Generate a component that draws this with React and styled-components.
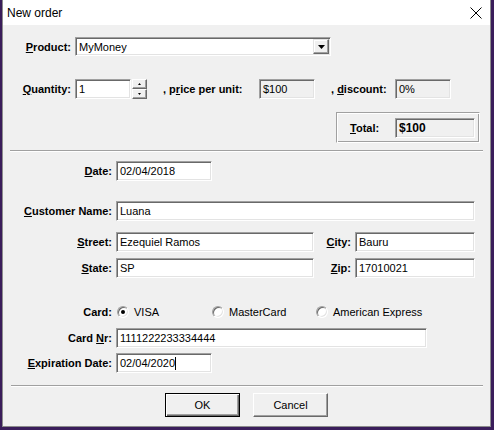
import React from 'react'
import styled, { createGlobalStyle } from 'styled-components'

const GlobalStyle = createGlobalStyle`
  html, body {
    margin: 0;
    padding: 0;
  }
  body {
    width: 494px;
    height: 430px;
    overflow: hidden;
    background: #3a1d5a;
    font-family: "Liberation Sans", Arial, sans-serif;
    font-size: 11px;
    color: #000;
  }
`

const Window = styled.div`
  margin-left: 2px;
  width: 489px;
  height: 427px;
  box-sizing: border-box;
  background: #f0f0f0;
  border: 1px solid #8c8c8c;
  border-top: none;
  display: flex;
  flex-direction: column;
`

const TitleBar = styled.div`
  height: 25px;
  flex-shrink: 0;
  background: #fff;
  display: flex;
  align-items: center;
  justify-content: space-between;
  padding: 0 8px 0 4px;
  font-size: 12px;
`

const Row = styled.div`
  display: flex;
  align-items: center;
  height: ${p => p.$h || 20}px;
  margin-top: ${p => p.$top || 0}px;
  justify-content: ${p => p.$justify || 'flex-start'};
  gap: ${p => p.$gap || 0}px;
  flex-shrink: 0;
`

const Label = styled.label`
  width: ${p => p.$w}px;
  flex-shrink: 0;
  text-align: ${p => p.$align || 'right'};
  font-weight: bold;
  margin-right: 4px;
  margin-left: ${p => p.$ml || 0}px;
  white-space: nowrap;
`

const Field = styled.div`
  width: ${p => p.$w}px;
  height: ${p => p.$h || 20}px;
  box-sizing: border-box;
  flex-shrink: 0;
  background: ${p => (p.$readOnly ? '#f0f0f0' : '#fff')};
  border: 1px solid;
  border-color: #a0a0a0 #fff #fff #a0a0a0;
  box-shadow: inset 1px 1px #696969, inset -1px -1px #e3e3e3;
  padding-left: 3px;
  display: flex;
  align-items: center;
  font-weight: ${p => (p.$bold ? 'bold' : 'normal')};
  font-size: ${p => (p.$bold ? 12 : 11)}px;
  white-space: nowrap;
  overflow: hidden;
`

const Caret = styled.span`
  display: inline-block;
  width: 1px;
  height: 13px;
  background: #000;
`

const Select = styled(Field)`
  justify-content: space-between;
  padding-right: 1px;
`

const DropButton = styled.div`
  width: 16px;
  height: 15px;
  box-sizing: border-box;
  background: #f0f0f0;
  border: 1px solid;
  border-color: #e3e3e3 #696969 #696969 #e3e3e3;
  box-shadow: inset -1px -1px #a0a0a0, inset 1px 1px #fff;
  display: flex;
  align-items: center;
  justify-content: center;
`

const Spinner = styled.div`
  width: 15px;
  height: 20px;
  margin-left: 1px;
  display: flex;
  flex-direction: column;
  flex-shrink: 0;
`

const SpinHalf = styled.div`
  flex: 1;
  box-sizing: border-box;
  background: #f0f0f0;
  border: 1px solid;
  border-color: #fff #696969 #696969 #fff;
  box-shadow: inset -1px -1px #a0a0a0;
  display: flex;
  align-items: center;
  justify-content: center;
`

const TotalBox = styled.div`
  width: 144px;
  height: 31px;
  box-sizing: border-box;
  margin-right: 10px;
  border: 1px solid;
  border-color: #a0a0a0 #fff #fff #a0a0a0;
  box-shadow: inset 1px 1px #fff, inset -1px -1px #a0a0a0;
  display: flex;
  align-items: center;
  padding-left: 13px;
`

const Separator = styled.div`
  height: 1px;
  flex-shrink: 0;
  margin: ${p => p.$top}px ${p => p.$right}px 0 ${p => p.$left}px;
  background: #a0a0a0;
  border-bottom: 1px solid #fff;
`

const Radio = styled.div`
  width: ${p => p.$w}px;
  display: flex;
  align-items: center;
  gap: 5px;
  flex-shrink: 0;
`

const RadioDot = styled.span`
  width: 12px;
  height: 12px;
  margin-left: 1px;
  box-sizing: border-box;
  border-radius: 50%;
  background: #fff;
  border: 1px solid;
  border-color: #a0a0a0 #fff #fff #a0a0a0;
  box-shadow: inset 1px 1px #696969, inset -1px -1px #e3e3e3;
  display: flex;
  align-items: center;
  justify-content: center;
  &::after {
    content: '';
    width: 4px;
    height: 4px;
    border-radius: 50%;
    background: ${p => (p.$checked ? '#000' : 'transparent')};
  }
`

const Button = styled.button`
  width: 75px;
  height: 24px;
  box-sizing: border-box;
  padding: 0;
  font-family: inherit;
  font-size: 11px;
  color: #000;
  background: #f0f0f0;
  border: 1px solid;
  border-color: ${p => (p.$default ? '#000' : '#fff #696969 #696969 #fff')};
  box-shadow: ${p =>
    p.$default
      ? 'inset 1px 1px #fff, inset -1px -1px #696969, inset -2px -2px #a0a0a0'
      : 'inset -1px -1px #a0a0a0'};
`

const Arrow = ({ w = 7, h = 4 }) => (
  <svg width={w} height={h} viewBox={`0 0 ${w} ${h}`}>
    <polygon points={`0,0 ${w},0 ${w / 2},${h}`} fill="#000" />
  </svg>
)

const UpArrow = () => (
  <svg width="3" height="2" viewBox="0 0 3 2">
    <polygon points="0,2 3,2 1.5,0" fill="#000" />
  </svg>
)

const CloseIcon = () => (
  <svg width="12" height="12" viewBox="0 0 12 12">
    <path d="M0.5 0.5 L11.5 11.5 M11.5 0.5 L0.5 11.5" stroke="#000" strokeWidth="1" />
  </svg>
)

const App = () => {
  return (
    <>
      <GlobalStyle />
      <Window>
        <TitleBar>
          <span>New order</span>
          <CloseIcon />
        </TitleBar>

        {/* product */}
        <Row $top={12} $h={19}>
          <Label $w={68}><u>P</u>roduct:</Label>
          <Select $w={256} $h={19}>
            <span>MyMoney</span>
            <DropButton><Arrow /></DropButton>
          </Select>
        </Row>

        {/* quantity, price, discount */}
        <Row $top={23}>
          <Label $w={68}><u>Q</u>uantity:</Label>
          <Field $w={56}>1</Field>
          <Spinner>
            <SpinHalf><UpArrow /></SpinHalf>
            <SpinHalf><Arrow w={3} h={2} /></SpinHalf>
          </Spinner>
          <Label $w={92} $ml={16} $align="left">, p<u>r</u>ice per unit:</Label>
          <Field $w={56} $readOnly>$100</Field>
          <Label $w={60} $ml={16} $align="left">, <u>d</u>iscount:</Label>
          <Field $w={56} $readOnly>0%</Field>
        </Row>

        {/* total */}
        <Row $top={13} $h={31} $justify="flex-end">
          <TotalBox>
            <Label $w={41} $align="left"><u>T</u>otal:</Label>
            <Field $w={80} $readOnly $bold>$100</Field>
          </TotalBox>
        </Row>

        <Separator $top={7} $left={7} $right={7} />

        {/* customer */}
        <Row $top={9}>
          <Label $w={109}><u>D</u>ate:</Label>
          <Field $w={96}>02/04/2018</Field>
        </Row>
        <Row $top={20}>
          <Label $w={109}><u>C</u>ustomer Name:</Label>
          <Field $w={359}>Luana</Field>
        </Row>
        <Row $top={11}>
          <Label $w={109}><u>S</u>treet:</Label>
          <Field $w={198}>Ezequiel Ramos</Field>
          <Label $w={37}><u>C</u>ity:</Label>
          <Field $w={120}>Bauru</Field>
        </Row>
        <Row $top={6}>
          <Label $w={109}><u>S</u>tate:</Label>
          <Field $w={198}>SP</Field>
          <Label $w={37}><u>Z</u>ip:</Label>
          <Field $w={120}>17010021</Field>
        </Row>

        {/* card */}
        <Row $top={24}>
          <Label $w={109}>Card:</Label>
          <Radio $w={95}><RadioDot $checked />VISA</Radio>
          <Radio $w={104}><RadioDot />MasterCard</Radio>
          <Radio $w={120}><RadioDot />American Express</Radio>
        </Row>
        <Row $top={6}>
          <Label $w={109}>Card <u>N</u>r:</Label>
          <Field $w={311}>1111222233334444</Field>
        </Row>
        <Row $top={5}>
          <Label $w={109}><u>E</u>xpiration Date:</Label>
          <Field $w={96}>02/04/2020<Caret /></Field>
        </Row>

        <Separator $top={12} $left={8} $right={7} />

        <Row $top={6} $h={24} $justify="center" $gap={13}>
          <Button $default>OK</Button>
          <Button>Cancel</Button>
        </Row>
      </Window>
    </>
  )
}

export default App
